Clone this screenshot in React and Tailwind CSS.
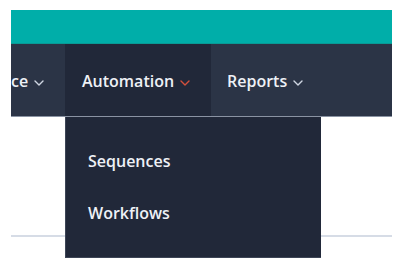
import React from "react";

function Chevron({ color = "#cfd6e2" }) {
  return (
    <svg width="10" height="6" viewBox="0 0 10 6" className="ml-[6px] mt-[3px]">
      <path d="M1 1 L5 5 L9 1" fill="none" stroke={color} strokeWidth="1.4" strokeLinecap="round" strokeLinejoin="round" />
    </svg>
  );
}

export default function App() {
  const font = { fontFamily: '"Open Sans", "Liberation Sans", sans-serif' };
  return (
    <div className="relative w-[399px] h-[262px] bg-white overflow-hidden" style={font}>
      <div className="pl-[11px] pr-[7px] pt-[10px]">
        <div className="h-[34px] bg-[#00aea9] border-b border-[#0a9a95]" />
        <div className="h-[73px] bg-[#2b3446] border-b border-[#8a93a3] flex text-[#eef1f6] text-[16px] font-semibold">
          <div className="w-[54px] flex items-center pt-[2px]">
            <span>ce</span>
            <Chevron />
          </div>
          <div className="w-[146px] bg-[#212839] flex items-center pl-[17px] pt-[2px]">
            <span>Automation</span>
            <Chevron color="#d2503c" />
          </div>
          <div className="flex items-center pl-[16px] pt-[2px]">
            <span>Reports</span>
            <Chevron />
          </div>
        </div>
        <div className="mt-[118px] h-[2px] bg-[#d6dce6]" />
      </div>
      <div className="absolute left-[65px] top-[117px] w-[256px] h-[141px] bg-[#212839] border-l border-b border-[#3d4556] flex flex-col pl-[22px] pt-[33px] gap-[30px] text-[#eef1f6] text-[16px] font-semibold">
        <span className="leading-[22px]">Sequences</span>
        <span className="leading-[22px]">Workflows</span>
      </div>
    </div>
  );
}
